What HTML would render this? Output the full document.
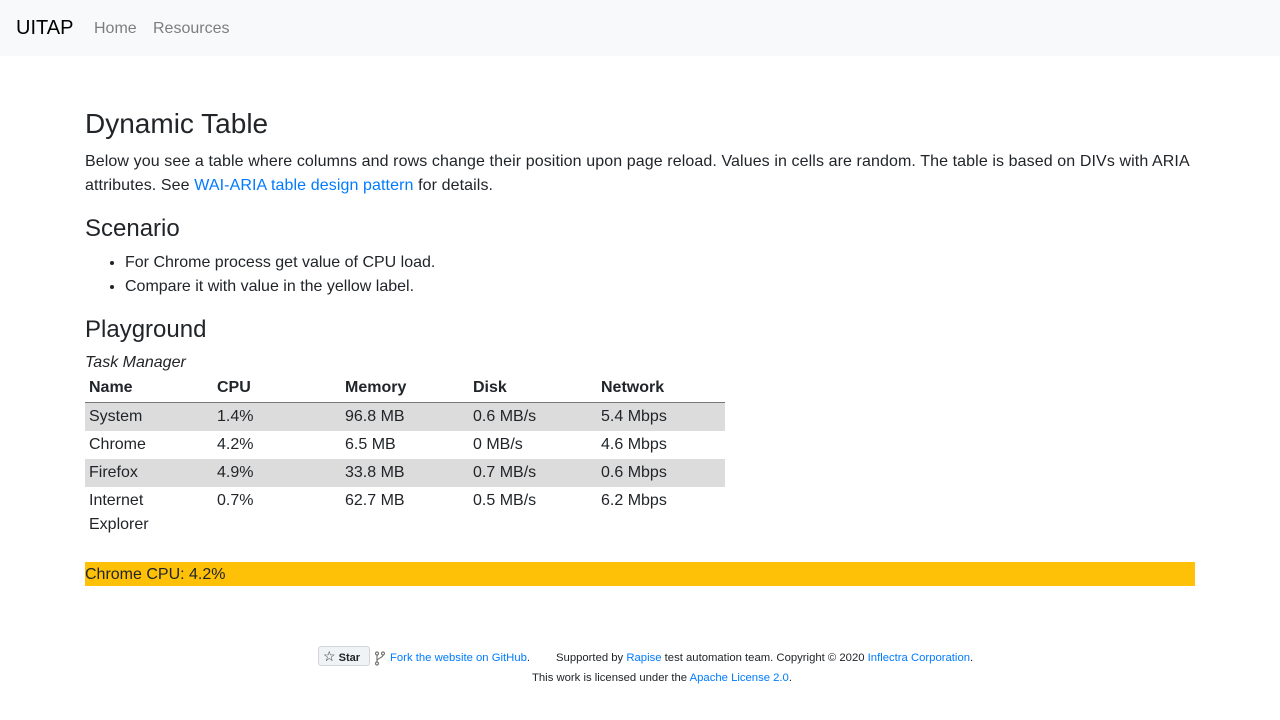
<!DOCTYPE html>
<html><head><meta charset="utf-8"><style>
body{margin:0;font-family:"Liberation Sans",sans-serif;color:#212529;font-size:16px;background:#fff}
nav{height:56px;background:#f8f9fa;position:relative}
nav .b{position:absolute;left:16px;top:17px;font-size:20px;color:#000}
nav .l{position:absolute;top:20px;font-size:16px;color:rgba(0,0,0,.5)}
.c{position:absolute;left:85px;width:1110px}
h3{font-size:28px;font-weight:400;margin:0;position:absolute;left:85px}
h4{font-size:24px;font-weight:400;margin:0;position:absolute;left:85px}
a{color:#007bff;text-decoration:none}
.t{position:absolute;left:85px;width:640px}
.r{display:flex;height:28px;line-height:28px}
.r div{width:128px;padding-left:4px;box-sizing:border-box}
.g{background:#dcdcdc}
.f{position:absolute;font-size:11.3px;line-height:14px}
</style></head><body>
<nav><span class="b">UITAP</span><span class="l" style="left:94px">Home</span><span class="l" style="left:153px">Resources</span></nav>
<h3 style="top:108px">Dynamic Table</h3>
<div class="c" style="top:150px;line-height:24px;letter-spacing:0.1px">Below you see a table where columns and rows change their position upon page reload. Values in cells are random. The table is based on DIVs with ARIA attributes. See <a>WAI-ARIA table design pattern</a> for details.</div>
<h4 style="top:215px">Scenario</h4>
<ul style="position:absolute;left:85px;top:251px;margin:0;padding-left:40px;line-height:24px;width:1000px"><li>For Chrome process get value of CPU load.</li><li>Compare it with value in the yellow label.</li></ul>
<h4 style="top:316px">Playground</h4>
<div class="c" style="top:351px;font-style:italic;line-height:24px">Task Manager</div>
<div class="t" style="top:374px">
<div class="r" style="font-weight:bold;border-bottom:1px solid #777;height:28px">
<div>Name</div><div>CPU</div><div>Memory</div><div>Disk</div><div>Network</div></div>
<div class="r g"><div>System</div><div>1.4%</div><div>96.8 MB</div><div>0.6 MB/s</div><div>5.4 Mbps</div></div>
<div class="r"><div>Chrome</div><div>4.2%</div><div>6.5 MB</div><div>0 MB/s</div><div>4.6 Mbps</div></div>
<div class="r g"><div>Firefox</div><div>4.9%</div><div>33.8 MB</div><div>0.7 MB/s</div><div>0.6 Mbps</div></div>
<div class="r" style="height:52px;line-height:24px;padding-top:2px;box-sizing:border-box"><div>Internet<br>Explorer</div><div>0.7%</div><div>62.7 MB</div><div>0.5 MB/s</div><div>6.2 Mbps</div></div>
</div>
<div class="c" style="top:562px;height:24px;line-height:26px;background:#ffc107">Chrome CPU: 4.2%</div>
<div style="position:absolute;top:646px;left:318px;width:52px;height:20px;border:1px solid #d1d5da;border-radius:3px;background:#eff3f6;font-size:11px;font-weight:bold;line-height:18px;box-sizing:border-box;padding-left:4px"><span style="font-size:14px;font-weight:normal">☆</span> Star</div>
<svg style="position:absolute;left:374px;top:651px" width="12" height="15" viewBox="0 0 12 15"><g fill="none" stroke="#777" stroke-width="1.2"><circle cx="3" cy="2.5" r="1.5"/><circle cx="9" cy="2.5" r="1.5"/><circle cx="3" cy="12.5" r="1.5"/><path d="M3 4v7M9 4c0 3-6 3-6 6"/></g></svg>
<div class="f" style="top:651px;left:390px"><a>Fork the website on GitHub</a>.</div>
<div class="f" style="top:651px;left:556px">Supported by <a>Rapise</a> test automation team. Copyright © 2020 <a>Inflectra Corporation</a>.</div>
<div class="f" style="top:671px;left:532px">This work is licensed under the <a>Apache License 2.0</a>.</div>
</body></html>
